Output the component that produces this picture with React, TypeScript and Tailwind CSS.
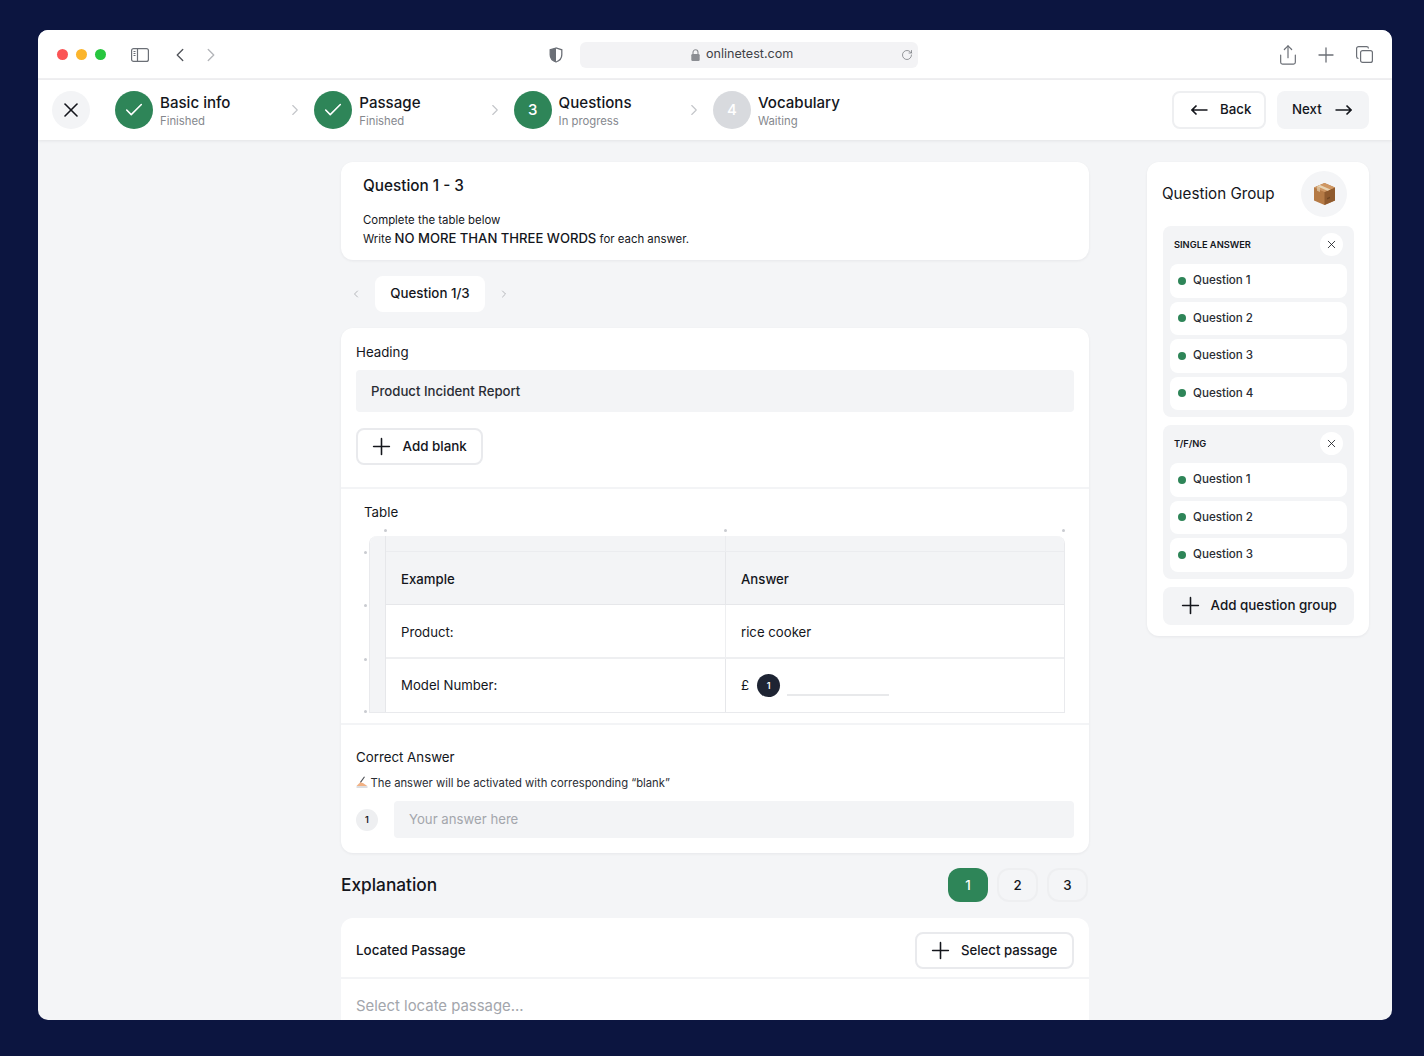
import { Check, ChevronLeft, ChevronRight, Plus, RotateCw, Share, X } from "lucide-react";

const steps = [
  { title: "Basic info", sub: "Finished", state: "done" },
  { title: "Passage", sub: "Finished", state: "done" },
  { title: "Questions", sub: "In progress", state: "active", num: "3" },
  { title: "Vocabulary", sub: "Waiting", state: "waiting", num: "4" },
];

const groups = [
  { name: "SINGLE ANSWER", items: ["Question 1", "Question 2", "Question 3", "Question 4"] },
  { name: "T/F/NG", items: ["Question 1", "Question 2", "Question 3"] },
];

const BrowserBar = () => (
  <div className="flex h-[50px] shrink-0 items-center border-b-2 border-[#f0f0f2] bg-white pt-[1px]">
    {/* traffic lights */}
    <div className="ml-[19px] flex gap-2">
      <span className="h-[11px] w-[11px] rounded-full bg-[#fb5455]" />
      <span className="h-[11px] w-[11px] rounded-full bg-[#fbb52c]" />
      <span className="h-[11px] w-[11px] rounded-full bg-[#27c63f]" />
    </div>
    <svg className="ml-[25px] text-[#6b6f76]" width="18" height="14" viewBox="0 0 18 14" fill="none" stroke="currentColor" strokeWidth="1.2">
      <rect x="0.6" y="0.6" width="16.8" height="12.8" rx="2" />
      <path d="M6.5 0.6v12.8" />
      <path d="M2.5 3.5h2M2.5 5.5h2M2.5 7.5h2" />
    </svg>
    <ChevronLeft className="ml-[20px] h-[22px] w-[22px] text-[#55585e]" strokeWidth={1.5} />
    <ChevronRight className="ml-[9px] h-[22px] w-[22px] text-[#b5b7bb]" strokeWidth={1.5} />
    <svg className="ml-[327px] text-[#6b6f76]" width="14" height="16" viewBox="0 0 14 16">
      <path d="M7 1 1.2 2.8v5C1.2 11.6 4 14 7 15c3-1 5.8-3.4 5.8-7.2v-5z" fill="none" stroke="currentColor" strokeWidth="1.3" />
      <path d="M7 1 1.2 2.8v5C1.2 11.6 4 14 7 15z" fill="currentColor" />
    </svg>
    <div className="ml-[17px] flex h-[26px] w-[338px] items-center rounded-md bg-[#f3f3f5] pr-[5px]">
      <div className="ml-[111px] flex items-center gap-[6px]">
        <svg width="9" height="12" viewBox="0 0 9 12" className="text-[#8b8d92]">
          <path d="M2 5V3.3a2.5 2.5 0 0 1 5 0V5" fill="none" stroke="currentColor" strokeWidth="1.1" />
          <rect x="0.3" y="5" width="8.4" height="7" rx="1.2" fill="currentColor" />
        </svg>
        <span className="text-[12.6px] leading-none text-[#3f4247]">onlinetest.com</span>
      </div>
      <RotateCw className="ml-auto h-[12px] w-[12px] text-[#77797e]" strokeWidth={1.5} />
    </div>
    <Share className="ml-[359px] h-[22px] w-[22px] text-[#6b6f76]" strokeWidth={1.3} />
    <Plus className="ml-[15px] h-[24px] w-[24px] text-[#6b6f76]" strokeWidth={1.3} />
    <svg className="ml-[18px] text-[#6b6f76]" width="17" height="17" viewBox="0 0 17 17" fill="none" stroke="currentColor" strokeWidth="1.2">
      <rect x="4.6" y="4.6" width="11.8" height="11.8" rx="2" />
      <path d="M2.5 12.5A2 2 0 0 1 .6 10.500V2.600a2 2 0 0 1 2-2h7.900a2 2 0 0 1 2 1.900" />
    </svg>
  </div>
);

const Arrow = ({ left }: { left?: boolean }) => (
  <svg width="17" height="12" viewBox="0 0 17 12" fill="none" stroke="currentColor" strokeWidth="1.6" className={left ? "rotate-180" : ""}>
    <path d="M.5 6h15.500M11.500 1.500 16 6l-4.500 4.500" />
  </svg>
);

const Stepper = () => (
  <div className="relative z-10 flex h-[60px] shrink-0 items-center bg-white pl-[14px] pr-[23px] shadow-[0_1px_3px_rgba(20,24,40,0.08)]">
    <button className="mr-[25px] flex h-[38px] w-[38px] items-center justify-center rounded-full bg-[#f3f4f6]">
      <X className="h-[24px] w-[24px] text-[#14161c]" strokeWidth={1.6} />
    </button>
    {steps.map((s, i) => (
      <div key={s.title} className="flex w-[199.3px] items-center">
        <div
          className={
            s.state === "waiting"
              ? "flex h-[38px] w-[38px] shrink-0 items-center justify-center rounded-full bg-[#d8dade] text-[15px] font-medium text-white"
              : "flex h-[38px] w-[38px] shrink-0 items-center justify-center rounded-full bg-[#2e8558] text-[15px] font-medium text-white"
          }
        >
          {s.state === "done" ? <Check className="h-[22px] w-[22px]" strokeWidth={1.7} /> : s.num}
        </div>
        <div className="ml-[7px]">
          <p className="pt-[1px] text-[15.1px] font-medium leading-[20px] text-[#14161c]">{s.title}</p>
          <p className="text-[11.3px] leading-[16px] text-[#85888e]">{s.sub}</p>
        </div>
        {i < 3 && <ChevronRight className="ml-auto mr-[10px] h-[18px] w-[18px] text-[#c3c5c9]" strokeWidth={1.5} />}
      </div>
    ))}
    <div className="ml-auto flex gap-[11px]">
      <button className="flex h-[38px] w-[94px] items-center gap-[12px] rounded-lg border-2 border-[#eeeff1] bg-white pl-[17px] text-[13.3px] font-medium text-[#14161c]">
        <Arrow left />
        Back
      </button>
      <button className="flex h-[38px] w-[92px] items-center gap-[13px] rounded-lg bg-[#f3f4f6] pl-[15px] text-[13.3px] font-medium text-[#14161c]">
        Next
        <Arrow />
      </button>
    </div>
  </div>
);

const Dot = ({ className }: { className: string }) => (
  <span className={`absolute h-[3px] w-[3px] rounded-full bg-[#c9cbd0] ${className}`} />
);

const QuestionTable = () => (
  <div className="relative ml-[28px] mr-[24px] mt-[14px]">
    <Dot className="left-[15px] top-[-7px]" />
    <Dot className="left-[355px] top-[-7px]" />
    <Dot className="left-[693px] top-[-7px]" />
    <Dot className="left-[-5px] top-[15px]" />
    <Dot className="left-[-5px] top-[68px]" />
    <Dot className="left-[-5px] top-[122px]" />
    <Dot className="left-[-5px] top-[174px]" />
    <div className="grid grid-cols-[16px_340px_1fr] grid-rows-[16px_53px_54px_53px] overflow-hidden rounded-t-lg border-x border-b border-[#e9eaed] text-[13.2px] font-normal text-[#14161c]">
      <div className="row-span-4 border-r border-[#e6e7ea] bg-[#f3f4f6]" />
      <div className="border-b border-r border-[#ebecef] bg-[#f3f4f6]" />
      <div className="border-b border-[#ebecef] bg-[#f3f4f6]" />
      <div className="flex items-center border-b border-r border-[#e6e7ea] bg-[#f3f4f6] pl-[15px] pt-[3px] font-medium">Example</div>
      <div className="flex items-center border-b border-[#e6e7ea] bg-[#f3f4f6] pl-[15px] pt-[3px] font-medium">Answer</div>
      <div className="flex items-center border-b-2 border-r border-[#eeeff1] pl-[15px] pt-[3px]">Product:</div>
      <div className="flex items-center border-b-2 border-[#eeeff1] pl-[15px] pt-[3px]">rice cooker</div>
      <div className="flex items-center border-r border-[#e6e7ea] pl-[15px] pt-[1px]">Model Number:</div>
      <div className="flex items-center pl-[15px]">
        <span>£</span>
        <span className="ml-[8px] flex h-[23px] w-[23px] items-center justify-center rounded-full bg-[#1e2433] text-[9px] font-semibold text-white">1</span>
        <span className="ml-[7px] mt-[19px] h-[2px] w-[102px] bg-[#e8e9eb]" />
      </div>
    </div>
  </div>
);

const BoxEmoji = () => (
  <svg width="23" height="24" viewBox="0 0 23 24">
    <path d="M11.5 1 22 5.5v13L11.5 23 1 18.5v-13z" fill="#b57a45" />
    <path d="M11.5 10 22 5.5v13L11.5 23z" fill="#8f5a2e" />
    <path d="M1 5.5 11.5 1 22 5.5 11.5 10z" fill="#cf9763" />
    <path d="M4 4.2 14.5 8.7 17.5 7.4 7 2.9z" fill="#e8d4b4" />
    <path d="M4 4.2v4.5l3 1.3V5.5z" fill="#ddc6a2" opacity="0.8" />
    <path d="M14 16l3-1.3v1.5L14 17.5z" fill="#6f4522" />
  </svg>
);

const WritingHand = () => (
  <svg width="12" height="12" viewBox="0 0 12 12" className="mr-[2.5px] inline-block align-[-1px]">
    <path d="M.5 11h11" stroke="#b9bcc2" strokeWidth="1" />
    <path d="M8.500.8 4.300 6.600" stroke="#4c4f55" strokeWidth="1.1" />
    <path d="M.5 10 4.300 6.200l3 1 4 2.800z" fill="#f1b184" />
  </svg>
);

const GroupPanel = () => (
  <aside className="ml-[58px] h-[474px] w-[222px] shrink-0 rounded-xl bg-white pl-[16px] pr-[15px] shadow-[0_1px_3px_rgba(20,24,40,0.06)]">
    <div className="flex h-[64px] items-center justify-between pr-[7px]">
      <span className="-ml-[1px] text-[15.2px] leading-none text-[#14161c]">Question Group</span>
      <span className="flex h-[46px] w-[46px] items-center justify-center rounded-full bg-[#f4f5f7]">
        <BoxEmoji />
      </span>
    </div>
    <div className="flex flex-col gap-2">
      {groups.map((g) => (
        <div key={g.name} className="rounded-lg bg-[#f3f4f6] px-[7px] pb-[7px] pt-[7px]">
          <div className="mb-[8px] flex h-[23px] items-center justify-between px-[4px]">
            <span className="text-[9.3px] font-semibold text-[#14161c]">{g.name}</span>
            <span className="flex h-[23px] w-[23px] items-center justify-center rounded-full bg-white">
              <X className="h-[13px] w-[13px] text-[#14161c]" strokeWidth={1.5} />
            </span>
          </div>
          <div className="flex flex-col gap-[4px]">
            {g.items.map((q) => (
              <div key={q} className="flex h-[33.5px] items-center gap-[7px] rounded-lg bg-white pl-[8px] text-[11.6px] font-medium text-[#2a2d34]">
                <span className="h-[8px] w-[8px] rounded-full bg-[#2e8558]" />
                {q}
              </div>
            ))}
          </div>
        </div>
      ))}
      <button className="flex h-[38px] items-center gap-[6.5px] rounded-lg bg-[#f3f4f6] pl-[14px] text-[13.4px] font-medium text-[#14161c]">
        <Plus className="h-[27px] w-[27px]" strokeWidth={1.4} />
        Add question group
      </button>
    </div>
  </aside>
);

export default function App() {
  return (
    <div className="h-[1056px] overflow-hidden bg-[#0c1540] pb-[36px] pl-[38px] pr-[32px] pt-[30px] [font-family:Inter,'Noto_Sans',sans-serif]">
      <div className="flex h-full flex-col overflow-hidden rounded-[10px] bg-[#f4f5f7]">
        <BrowserBar />
        <Stepper />
        <div className="flex flex-1 items-start overflow-hidden pl-[303px] pt-[22px]">
          <main className="w-[748px] shrink-0">
            <section className="h-[98px] rounded-xl bg-white px-[22px] pt-[14px] shadow-[0_1px_3px_rgba(20,24,40,0.06)]">
              <h2 className="text-[15.3px] font-medium leading-[20px] text-[#14161c]">Question 1 - 3</h2>
              <p className="mt-[16px] text-[11.4px] leading-[16px] text-[#14161c]">Complete the table below</p>
              <p className="text-[11.4px] leading-[20px] text-[#14161c]">
                Write <span className="text-[13.1px] font-medium">NO MORE THAN THREE WORDS</span> for each answer.
              </p>
            </section>

            <div className="mt-[16px] flex h-[36px] items-center">
              <ChevronLeft className="ml-[9px] h-[12px] w-[12px] text-[#b5b7bb]" />
              <span className="ml-[13px] flex h-[36px] w-[110px] items-center justify-center rounded-lg bg-white text-[13.3px] font-medium text-[#14161c]">Question 1/3</span>
              <ChevronRight className="ml-[13px] h-[12px] w-[12px] text-[#b5b7bb]" />
            </div>

            <section className="mt-[16px] h-[525px] rounded-xl bg-white shadow-[0_1px_3px_rgba(20,24,40,0.06)]">
              <div className="h-[161px] border-b-2 border-[#f3f4f6] px-[15px] pt-[14px]">
                <p className="text-[13.3px] leading-[20px] text-[#14161c]">Heading</p>
                <div className="mt-[8px] flex h-[42px] items-center rounded bg-[#f3f4f6] pl-[15px] pt-[1px] text-[13.2px] font-medium text-[#2a2d34]">Product Incident Report</div>
                <button className="mt-[16px] flex h-[37px] w-[127px] items-center gap-[7.5px] rounded-lg border-2 border-[#e9eaed] pl-[10px] text-[13.4px] font-medium text-[#14161c]">
                  <Plus className="h-[27px] w-[27px]" strokeWidth={1.4} />
                  Add blank
                </button>
              </div>
              <div className="h-[236px] border-b-2 border-[#f3f4f6] pt-[13px]">
                <p className="pl-[23px] text-[13.3px] leading-[20px] text-[#14161c]">Table</p>
                <QuestionTable />
              </div>
              <div className="px-[15px] pt-[22px]">
                <p className="text-[13.3px] leading-[20px] text-[#14161c]">Correct Answer</p>
                <p className="mt-[7px] text-[11.25px] leading-[18px] text-[#2a2d34]">
                  <WritingHand />
                  The answer will be activated with corresponding “blank”
                </p>
                <div className="mt-[9px] flex items-center">
                  <span className="flex h-[22px] w-[22px] items-center justify-center rounded-full bg-[#eeeff1] text-[9px] font-semibold text-[#14161c]">1</span>
                  <div className="ml-[16px] flex h-[37px] flex-1 items-center rounded bg-[#f3f4f6] pl-[15px] text-[13.2px] text-[#a3a6ac]">Your answer here</div>
                </div>
              </div>
            </section>

            <div className="mt-[15px] flex h-[34px] items-center">
              <h2 className="text-[17.3px] font-medium text-[#14161c]">Explanation</h2>
              <div className="ml-auto flex gap-[9px] pr-[1px] text-[13.3px] font-medium">
                <span className="flex h-[34px] w-[40px] items-center justify-center rounded-xl bg-[#2e8558] pt-[1px] text-white">1</span>
                <span className="flex h-[34px] w-[41px] items-center justify-center rounded-xl border-2 border-[#eeeff1] pt-[1px] text-[#14161c]">2</span>
                <span className="flex h-[34px] w-[41px] items-center justify-center rounded-xl border-2 border-[#eeeff1] pt-[1px] text-[#14161c]">3</span>
              </div>
            </div>

            <section className="mt-[16px] h-[200px] rounded-xl bg-white">
              <div className="flex h-[61px] items-center justify-between border-b-2 border-[#f3f4f6] px-[15px] pt-[5px]">
                <p className="text-[13.4px] font-medium text-[#14161c]">Located Passage</p>
                <button className="flex h-[37px] w-[159px] items-center gap-[7px] rounded-lg border-2 border-[#e9eaed] pl-[10px] text-[13.2px] font-medium text-[#14161c]">
                  <Plus className="h-[27px] w-[27px]" strokeWidth={1.4} />
                  <span className="pt-[1px]">Select passage</span>
                </button>
              </div>
              <p className="pl-[15px] pt-[17px] text-[14.9px] leading-[20px] text-[#a3a6ac]">Select locate passage...</p>
            </section>
          </main>
          <GroupPanel />
        </div>
      </div>
    </div>
  );
}
